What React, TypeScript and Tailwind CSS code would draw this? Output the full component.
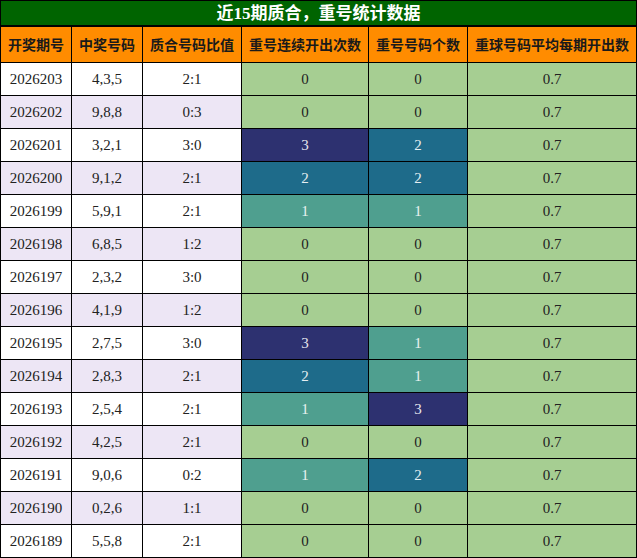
import React from 'react';

type Row = {
  id: string;
  nums: string;
  ratio: string;
  streak: number;
  count: number;
  avg: string;
};

const rows: Row[] = [
  { id: '2026203', nums: '4,3,5', ratio: '2:1', streak: 0, count: 0, avg: '0.7' },
  { id: '2026202', nums: '9,8,8', ratio: '0:3', streak: 0, count: 0, avg: '0.7' },
  { id: '2026201', nums: '3,2,1', ratio: '3:0', streak: 3, count: 2, avg: '0.7' },
  { id: '2026200', nums: '9,1,2', ratio: '2:1', streak: 2, count: 2, avg: '0.7' },
  { id: '2026199', nums: '5,9,1', ratio: '2:1', streak: 1, count: 1, avg: '0.7' },
  { id: '2026198', nums: '6,8,5', ratio: '1:2', streak: 0, count: 0, avg: '0.7' },
  { id: '2026197', nums: '2,3,2', ratio: '3:0', streak: 0, count: 0, avg: '0.7' },
  { id: '2026196', nums: '4,1,9', ratio: '1:2', streak: 0, count: 0, avg: '0.7' },
  { id: '2026195', nums: '2,7,5', ratio: '3:0', streak: 3, count: 1, avg: '0.7' },
  { id: '2026194', nums: '2,8,3', ratio: '2:1', streak: 2, count: 1, avg: '0.7' },
  { id: '2026193', nums: '2,5,4', ratio: '2:1', streak: 1, count: 3, avg: '0.7' },
  { id: '2026192', nums: '4,2,5', ratio: '2:1', streak: 0, count: 0, avg: '0.7' },
  { id: '2026191', nums: '9,0,6', ratio: '0:2', streak: 1, count: 2, avg: '0.7' },
  { id: '2026190', nums: '0,2,6', ratio: '1:1', streak: 0, count: 0, avg: '0.7' },
  { id: '2026189', nums: '5,5,8', ratio: '2:1', streak: 0, count: 0, avg: '0.7' },
];

const headers = ['开奖期号', '中奖号码', '质合号码比值', '重号连续开出次数', '重号号码个数', '重球号码平均每期开出数'];

// heat colour by value
const heat = (v: number) => {
  if (v >= 3) return 'bg-[#2d3170] text-[#e6e6ee]';
  if (v === 2) return 'bg-[#1e6b8a] text-[#e6eef2]';
  if (v === 1) return 'bg-[#4f9f8f] text-[#e8f2ef]';
  return 'bg-[#a6ce92] text-[#222]';
};

const cell = 'flex items-center justify-center';

const App: React.FC = () => {
  return (
    <div className="w-[637px] h-[558px] bg-white">
      <div className="w-[637px] border border-black font-['Liberation_Serif','Noto_Sans_CJK_SC',serif]">
        {/* TITLE */}
        <div className="h-[24px] bg-[#006400] border-b-2 border-black box-content flex items-center justify-center">
          <span className="text-[17px] font-bold text-white leading-none font-['Liberation_Serif','Noto_Sans_CJK_SC',serif]">
            近15期质合，重号统计数据
          </span>
        </div>

        <div className="grid grid-cols-[70px_70px_98px_126px_98px_168px] gap-px bg-black">
          {headers.map((h) => (
            <div
              key={h}
              className={`${cell} h-[35px] bg-[#ff8c00] text-[14px] font-bold text-[#1a1a1a] font-['Noto_Sans_CJK_SC',sans-serif] whitespace-nowrap`}
            >
              {h}
            </div>
          ))}

          {rows.map((r, i) => {
            const base = i % 2 === 1 ? 'bg-[#ede6f5]' : 'bg-white';
            return (
              <React.Fragment key={r.id}>
                <div className={`${cell} h-[32px] ${base} text-[15px] text-[#222]`}>{r.id}</div>
                <div className={`${cell} h-[32px] ${base} text-[15px] text-[#222]`}>{r.nums}</div>
                <div className={`${cell} h-[32px] ${base} text-[15px] text-[#222]`}>{r.ratio}</div>
                <div className={`${cell} h-[32px] ${heat(r.streak)} text-[15px]`}>{r.streak}</div>
                <div className={`${cell} h-[32px] ${heat(r.count)} text-[15px]`}>{r.count}</div>
                <div className={`${cell} h-[32px] bg-[#a6ce92] text-[15px] text-[#222]`}>{r.avg}</div>
              </React.Fragment>
            );
          })}
        </div>
      </div>
    </div>
  );
};

export default App;
